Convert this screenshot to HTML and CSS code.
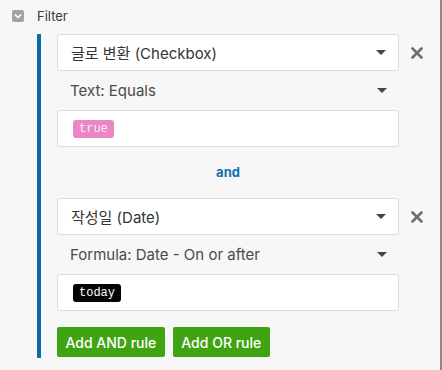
FILE: index.html
```html
<!DOCTYPE html>
<html lang="en">
<head>
    <meta charset="UTF-8">
    <meta name="viewport" content="width=device-width, initial-scale=1.0">
    <title>Filter</title>
    <link rel="stylesheet" href="styles.css">
</head>
<body>
    <div class="panel">
        <div class="section-head">
            <span class="toggle">
                <svg width="8" height="6" viewBox="0 0 8 6"><path d="M1 1.5 L4 4.5 L7 1.5" fill="none" stroke="#fff" stroke-width="1.6"/></svg>
            </span>
            <span class="section-title">Filter</span>
        </div>

        <div class="rules">
            <div class="rule">
                <div class="rule-row">
                    <div class="select">
                        <span>글로 변환 (Checkbox)</span>
                        <span class="caret"></span>
                    </div>
                    <button class="remove">
                        <svg width="12" height="12" viewBox="0 0 12 12"><path d="M1.5 1.5 L10.5 10.5 M10.5 1.5 L1.5 10.5" stroke="#6f6f6f" stroke-width="2.6" stroke-linecap="round"/></svg>
                    </button>
                </div>
                <div class="condition">
                    <span>Text: Equals</span>
                    <span class="caret"></span>
                </div>
                <div class="value">
                    <span class="token pink">true</span>
                </div>
            </div>

            <div class="joiner">and</div>

            <div class="rule">
                <div class="rule-row">
                    <div class="select">
                        <span>작성일 (Date)</span>
                        <span class="caret"></span>
                    </div>
                    <button class="remove">
                        <svg width="12" height="12" viewBox="0 0 12 12"><path d="M1.5 1.5 L10.5 10.5 M10.5 1.5 L1.5 10.5" stroke="#6f6f6f" stroke-width="2.6" stroke-linecap="round"/></svg>
                    </button>
                </div>
                <div class="condition">
                    <span>Formula: Date - On or after</span>
                    <span class="caret"></span>
                </div>
                <div class="value">
                    <span class="token dark">today</span>
                </div>
            </div>

            <div class="actions">
                <button class="add">Add AND rule</button>
                <button class="add">Add OR rule</button>
            </div>
        </div>
    </div>
</body>
</html>
```

FILE: styles.css
```css
body {
    margin: 0;
    background: #f7f7f7;
    font-family: Inter, "Noto Sans CJK KR", sans-serif;
    color: #333;
}

.panel {
    width: 440px;
    height: 370px;
    border-right: 2px solid #8a8a8a;
}

.section-head {
    display: flex;
    align-items: center;
    height: 32px;
    padding-left: 12px;
    padding-bottom: 2px;
}

.toggle {
    display: flex;
    align-items: center;
    justify-content: center;
    width: 12px;
    height: 12px;
    border-radius: 2px;
    background: #a3a3a3;
}

.section-title {
    margin-left: 13px;
    font-size: 13px;
    color: #3a3a3a;
}

.rules {
    margin-left: 37px;
    width: 385px;
    border-left: 4px solid #0b69a8;
    padding-left: 16px;
    padding-bottom: 1px;
}

.rule-row {
    display: flex;
    align-items: center;
}

.select {
    display: flex;
    align-items: center;
    justify-content: space-between;
    width: 342px;
    height: 37px;
    box-sizing: border-box;
    padding: 0 12px 0 13px;
    background: #fff;
    border: 1px solid #dcdcdc;
    border-radius: 3px;
    font-size: 15px;
    color: #333;
}

.caret {
    width: 0;
    height: 0;
    border-left: 5px solid transparent;
    border-right: 5px solid transparent;
    border-top: 5px solid #444;
}

.remove {
    display: flex;
    align-items: center;
    justify-content: center;
    width: 36px;
    height: 20px;
    padding: 0;
    border: none;
    background: none;
    cursor: pointer;
}

.condition {
    display: flex;
    align-items: center;
    justify-content: space-between;
    width: 342px;
    height: 39px;
    box-sizing: border-box;
    padding: 0 12px 0 13px;
    font-size: 15px;
    color: #4a4a4a;
}

.value {
    display: flex;
    align-items: center;
    width: 342px;
    height: 37px;
    box-sizing: border-box;
    padding-left: 15px;
    background: #fff;
    border: 1px solid #dcdcdc;
    border-radius: 3px;
}

.token {
    display: inline-block;
    height: 18px;
    line-height: 18px;
    padding: 0 6px;
    border-radius: 3px;
    font-family: "Courier New", "Liberation Mono", monospace;
    font-size: 12px;
}

.token.pink {
    background: #e886c6;
    color: #fbe9f4;
}

.token.dark {
    background: #050505;
    color: #fff;
}

.joiner {
    width: 342px;
    height: 51px;
    line-height: 51px;
    text-align: center;
    font-size: 13px;
    font-weight: bold;
    color: #1170b0;
}

.actions {
    display: flex;
    gap: 8px;
    margin-top: 16px;
}

.add {
    height: 30px;
    padding: 0 8.5px;
    border: none;
    border-radius: 2px;
    background: #3fa312;
    color: #fff;
    font-family: Inter, sans-serif;
    font-size: 14px;
    font-weight: 500;
    cursor: pointer;
}
```
